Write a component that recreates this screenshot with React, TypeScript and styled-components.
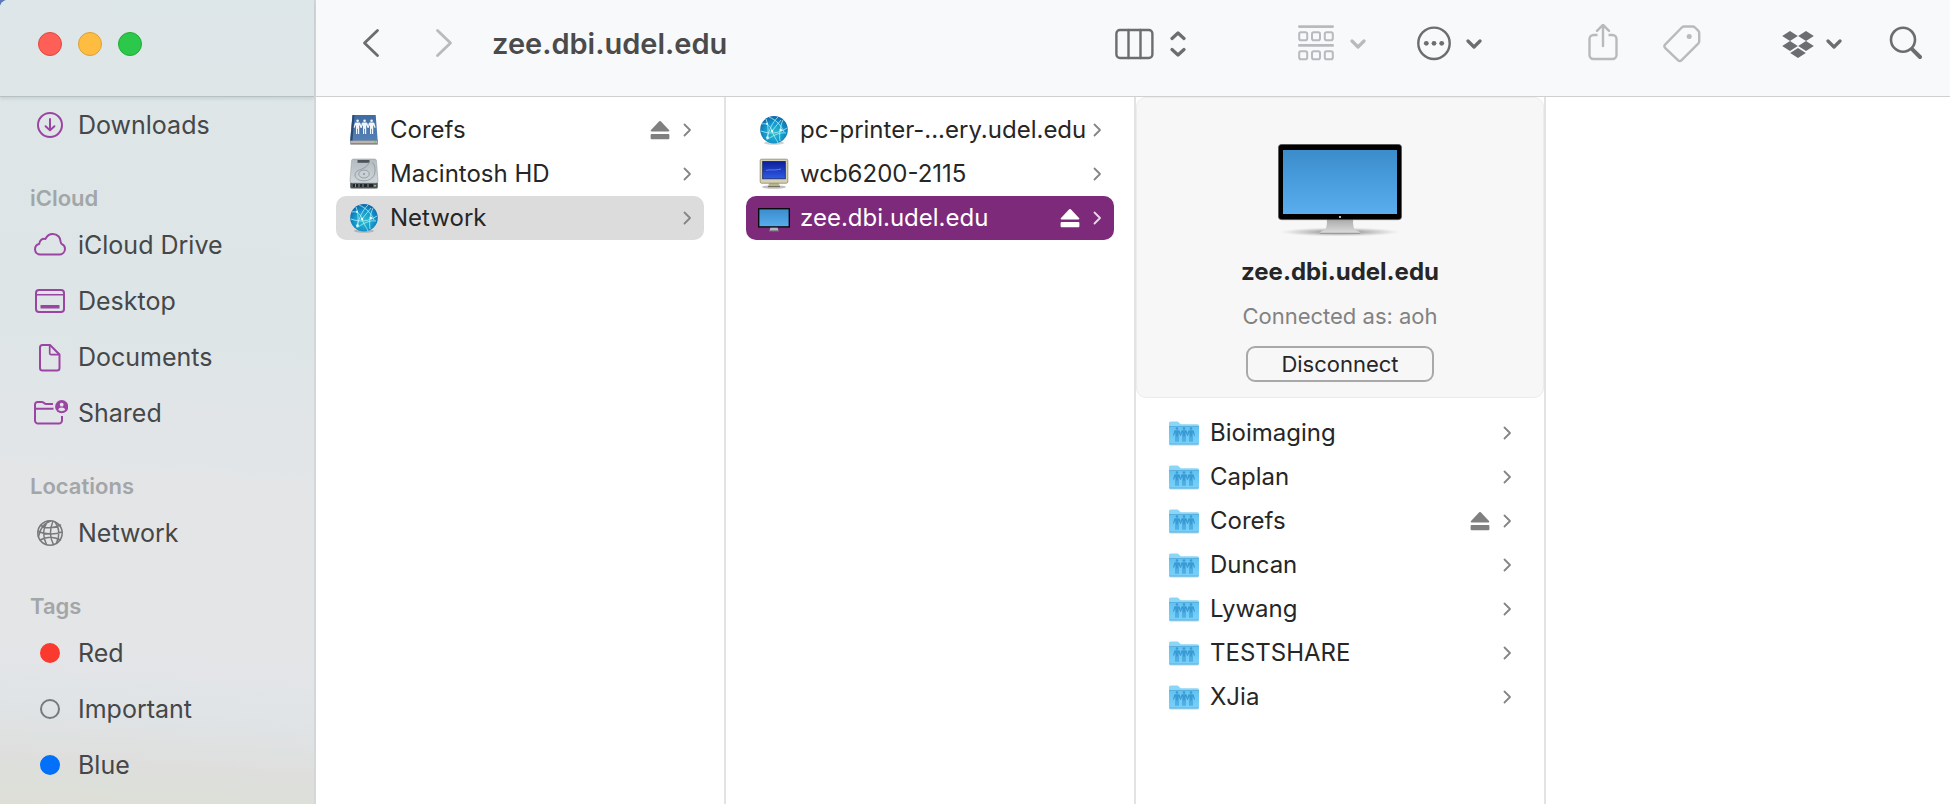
import React from "react";
import styled, { createGlobalStyle } from "styled-components";

const GlobalStyle = createGlobalStyle`
  *, *::before, *::after { box-sizing: border-box; }
  body {
    margin: 0;
    background: #5a78bd;
    font-family: Inter, "Liberation Sans", sans-serif;
    color: #262626;
  }
  button { font: inherit; color: inherit; }
  ul { list-style: none; margin: 0; padding: 0; }
  svg { display: block; flex: none; }
`;

/* ---------- window frame ---------- */

const Window = styled.div`
  display: grid;
  grid-template-columns: 316px minmax(0, 1fr);
  min-height: 100vh;
  overflow: hidden;
  border-top-left-radius: 8px;
  background: #ffffff;
`;

const Sidebar = styled.aside`
  border-right: 2px solid #d4d7d9;
  background: linear-gradient(
    184deg,
    #dde6e8 0%,
    #dde5e7 40%,
    #e1e5e8 50%,
    #e2e5e8 57%,
    #e4e5e7 60%,
    #e4e5e7 80%,
    #e0e4e7 87%,
    #dedfdd 94%,
    #dddfd7 100%
  );
`;

const SidebarTop = styled.div`
  display: flex;
  align-items: center;
  gap: 16px;
  height: 97px;
  padding: 0 38px 9px;
  border-bottom: 1px solid #b9c0c2;
  box-shadow: 0 2px 3px rgba(80, 95, 100, 0.14);
`;

const WindowButton = styled.button<{ $fill: string; $edge: string }>`
  width: 24px;
  height: 24px;
  padding: 0;
  border: 1px solid ${(p) => p.$edge};
  border-radius: 50%;
  background: ${(p) => p.$fill};
`;

const Main = styled.main`
  display: flex;
  flex-direction: column;
  min-width: 0;
`;

/* ---------- sidebar list ---------- */

const SectionTitle = styled.h2`
  margin: 0;
  padding: 26px 0 0 30px;
  font-size: 22px;
  line-height: 38px;
  font-weight: 600;
  color: #a2a6a8;
`;

const SideLink = styled.a`
  display: flex;
  align-items: center;
  gap: 10px;
  height: 56px;
  padding-left: 32px;
  font-size: 25px;
  line-height: 32px;
  color: #454749;
  text-decoration: none;
`;

/* ---------- toolbar ---------- */

const Toolbar = styled.header`
  display: flex;
  align-items: center;
  height: 97px;
  padding: 0 28px 9px 46px;
  border-bottom: 1px solid #cfd0d2;
  background: #f8f9fb;
  color: #6c6d70;
`;

const ToolButton = styled.button<{ $dim?: boolean; $gap?: number }>`
  display: flex;
  align-items: center;
  gap: ${(p) => p.$gap ?? 0}px;
  padding: 0;
  border: 0;
  background: none;
  color: ${(p) => (p.$dim ? "#b9babd" : "#6c6d70")};
`;

const NavButtons = styled.div`
  display: flex;
  gap: 55px;
`;

const Title = styled.h1`
  flex: 1;
  margin: 0 0 0 39px;
  font-size: 29px;
  line-height: 36px;
  font-weight: 600;
  color: #4b4b4c;
  white-space: nowrap;
`;

const ToolGroup = styled.div<{ $gap: number; $before: number }>`
  display: flex;
  align-items: center;
  gap: ${(p) => p.$gap}px;
  margin-left: ${(p) => p.$before}px;
`;

/* ---------- columns ---------- */

const Columns = styled.div`
  display: flex;
  flex: 1;
  background: #ffffff;
`;

const Column = styled.section`
  flex: 0 0 410px;
  border-right: 2px solid #e3e3e4;
`;

const Rows = styled.ul<{ $top: number }>`
  padding: ${(p) => p.$top}px 20px 0;
`;

const RowBox = styled.li<{ $tone?: "gray" | "accent" }>`
  display: flex;
  align-items: center;
  height: 44px;
  padding-right: 12px;
  border-radius: 10px;
  background: ${(p) => (p.$tone === "gray" ? "#dcdcdc" : p.$tone === "accent" ? "#7d2a7b" : "none")};
  color: ${(p) => (p.$tone === "accent" ? "#ffffff" : "#262626")};
`;

const RowLink = styled.a`
  display: flex;
  flex: 1;
  align-items: center;
  gap: 10px;
  min-width: 0;
  padding-left: 12px;
  color: inherit;
  font-size: 24px;
  line-height: 32px;
  text-decoration: none;
  white-space: nowrap;
`;

const Eject = styled.button<{ $light?: boolean }>`
  padding: 0;
  margin-right: 12px;
  border: 0;
  background: none;
  color: ${(p) => (p.$light ? "#ffffff" : "#808080")};
`;

const Arrow = styled.svg<{ $light?: boolean }>`
  color: ${(p) => (p.$light ? "#e9d8e9" : "#858585")};
`;

/* ---------- server preview ---------- */

const Preview = styled.div`
  display: flex;
  flex-direction: column;
  align-items: center;
  height: 301px;
  padding-top: 46px;
  border: 1px solid #ececec;
  border-radius: 10px;
  background: #f7f7f7;
`;

const PreviewName = styled.h2`
  margin: 20px 0 0;
  font-size: 24px;
  line-height: 32px;
  font-weight: 700;
`;

const PreviewStatus = styled.p`
  margin: 13px 0 0;
  font-size: 22px;
  line-height: 30px;
  color: #828282;
`;

const Disconnect = styled.button`
  width: 188px;
  height: 36px;
  margin-top: 15px;
  padding: 0;
  border: 2px solid #a9a9a9;
  border-radius: 9px;
  background: #f7f7f7;
  font-size: 22px;
  line-height: 30px;
`;

/* ---------- sidebar icons ---------- */

const PURPLE = "#9b45a3";

const SideSvg = ({ children, color = PURPLE }: { children: React.ReactNode; color?: string }) => (
  <svg width="36" height="32" viewBox="0 0 36 32" fill="none" stroke={color} strokeWidth="2" strokeLinecap="round" strokeLinejoin="round" aria-hidden>
    {children}
  </svg>
);

const DownloadIcon = () => (
  <SideSvg>
    <circle cx="18" cy="16" r="12" />
    <path d="M18 10v11M13.6 17.2l4.4 4.2 4.4-4.2" />
  </SideSvg>
);

const CloudIcon = () => (
  <SideSvg>
    <path d="M8.5 25.500C5.200 25.500 3 23.200 3 20.300c0-2.700 1.500-4.600 4.200-5.300.2-3.400 2.600-5.800 6.300-5.100C15 6.800 17.500 5 20.800 5c4.600 0 7.800 3.400 7.900 8 .1 1 .4 1.600 1.300 2.100 2 1 3 2.600 3 4.700 0 3.200-2.400 5.700-5.700 5.700z" />
  </SideSvg>
);

const DesktopIcon = () => (
  <SideSvg>
    <rect x="4" y="5" width="28" height="22" rx="3" />
    <path d="M4 9.700h28" strokeWidth="1.600" />
    <rect x="8.500" y="20" width="19" height="3.600" rx=".6" fill={PURPLE} stroke="none" />
  </SideSvg>
);

const DocumentIcon = () => (
  <SideSvg>
    <path d="M10.500 4H18l9.500 9.500V27a2.500 2.500 0 0 1-2.500 2.500H10.500A2.500 2.500 0 0 1 8 27V6.500A2.500 2.500 0 0 1 10.500 4z" />
    <path d="M17.700 4.500v7.700a1.500 1.500 0 0 0 1.500 1.500h8" strokeWidth="1.700" />
  </SideSvg>
);

const SharedIcon = () => (
  <SideSvg>
    <path d="M30 19v4.500a3 3 0 0 1-3 3H6a3 3 0 0 1-3-3V7.500A2.500 2.500 0 0 1 5.500 5h4.200c2.300 0 2.300 2 4.600 2H21M3 11.800h18.500" strokeLinecap="butt" />
    <circle cx="29.700" cy="9.700" r="6.600" fill={PURPLE} stroke="none" />
    <circle cx="29.700" cy="7.700" r="1.900" fill="#e1e5e8" stroke="none" />
    <path d="M26.200 13c.5-1.800 1.800-2.500 3.500-2.500s3 .7 3.500 2.500c-1.900 1.500-5.100 1.500-7 0z" fill="#e1e5e8" stroke="none" />
  </SideSvg>
);

const GlobeIcon = () => (
  <SideSvg color="#77797b">
    <g strokeWidth="1.500">
      <circle cx="18" cy="16" r="12.200" />
      <path d="M16 4.200C10.500 11 10.500 20 14.500 27.500M21 4.200C17.500 12 17.500 20 21.500 27.600M23 5c4.500 5.500 5 14 1.500 21M18.500 4C13 6 8 11 6.500 19.500M8.500 8.500c6 3 13.500 3 20-.5M6 14.500c8 3 17 3 24 .5M8 23c6.500-3.500 14-3.500 20.500 0" />
    </g>
  </SideSvg>
);

const TagDot = ({ fill, edge }: { fill: string; edge: string }) => (
  <SideSvg color={edge}>
    <circle cx="18" cy="16" r="9" fill={fill} />
  </SideSvg>
);

/* ---------- toolbar icons ---------- */

const ToolSvg = ({ width, stroke = 2.4, children }: { width: number; stroke?: number; children: React.ReactNode }) => (
  <svg width={width} height="40" viewBox={`0 0 ${width} 40`} fill="none" stroke="currentColor" strokeWidth={stroke} strokeLinecap="round" strokeLinejoin="round" aria-hidden>
    {children}
  </svg>
);

const SmallChevron = () => (
  <ToolSvg width={16} stroke={3.2}>
    <path d="M2 17l6 6 6-6" />
  </ToolSvg>
);

const ColumnsIcon = () => (
  <ToolSvg width={39}>
    <rect x="1.400" y="6" width="36" height="28" rx="3.500" />
    <path d="M13.500 6v28M25.500 6v28" />
  </ToolSvg>
);

const UpDownIcon = () => (
  <ToolSvg width={16} stroke={3.2}>
    <path d="M2 14.500L8 9l6 5.500M2 25.500L8 31l6-5.500" />
  </ToolSvg>
);

const GroupIcon = () => (
  <ToolSvg width={36} stroke={2}>
    <path d="M1.300 2.600h33.400M1.300 21.400h33.400" strokeWidth="2.600" />
    {[8.2, 27.2].map((y) =>
      [1.2, 14, 26.800].map((x) => <rect key={`${x}-${y}`} x={x} y={y} width="8" height="8" rx="1.800" />)
    )}
  </ToolSvg>
);

const MoreIcon = () => (
  <ToolSvg width={34}>
    <circle cx="17" cy="19.300" r="15.700" />
    <g fill="currentColor" stroke="none">
      <circle cx="9.300" cy="19.300" r="2.400" />
      <circle cx="17" cy="19.300" r="2.400" />
      <circle cx="24.700" cy="19.300" r="2.400" />
    </g>
  </ToolSvg>
);

const ShareIcon = () => (
  <ToolSvg width={30}>
    <path d="M9.500 11H5.500a4 4 0 0 0-4 4v16a4 4 0 0 0 4 4h19a4 4 0 0 0 4-4V15a4 4 0 0 0-4-4h-4" strokeLinecap="butt" />
    <path d="M15 22V1.200M9 6.800l6-6 6 6" />
  </ToolSvg>
);

const TagIcon = () => (
  <ToolSvg width={38}>
    <path d="M21.300 2.500h8.200c1 0 1.800.3 2.500 1l3.200 3.200c.7.700 1 1.500 1 2.500v8c0 1-.3 1.800-1 2.500L18.600 36.200c-1.200 1.200-2.500 1.200-3.700 0L2.300 24.100c-1.200-1.200-1.200-2.500 0-3.700L18.800 3.500c.7-.7 1.500-1 2.500-1z" />
    <circle cx="26.200" cy="12.500" r="2.500" fill="currentColor" stroke="none" />
  </ToolSvg>
);

const DropboxIcon = () => (
  <ToolSvg width={32}>
    <g fill="currentColor" stroke="none">
      {[
        [8, 12],
        [24, 12],
        [8, 22],
        [24, 22],
        [16, 29],
      ].map(([x, y]) => (
        <path key={`${x}-${y}`} d={`M${x} ${y - 5}l7.800 5-7.800 5-7.800-5z`} />
      ))}
    </g>
  </ToolSvg>
);

const SearchIcon = () => (
  <ToolSvg width={33} stroke={2.6}>
    <circle cx="14" cy="15.700" r="12" />
    <path d="M23.300 25.300l7.700 7.700" strokeWidth="4" />
  </ToolSvg>
);

/* ---------- file icons ---------- */

const People = ({ fill }: { fill: string }) => (
  <g fill={fill}>
    {[-7, 0, 7].map((x) => (
      <g key={x} transform={`translate(${x} 0)`}>
        <circle cx="16" cy="9.700" r="1.300" />
        <path d="M14.200 11.500h3.600c.6 0 .9.300 1.100.9l1.100 4.200-.9.300-1.500-3.100V23h-1.200v-5.200h-.8V23h-1.200v-9.200l-1.500 3.100-.9-.3 1.100-4.200c.2-.6.5-.9 1.100-.9z" />
      </g>
    ))}
  </g>
);

const FileSvg = ({ children }: { children: React.ReactNode }) => (
  <svg width="32" height="32" viewBox="0 0 32 32" aria-hidden>
    {children}
  </svg>
);

const ShareDiskIcon = () => (
  <FileSvg>
    <path d="M2.300 26h27.500v4.600H2.300z" fill="#55504d" opacity=".75" />
    <path d="M3 26.500h26v2.700H3z" fill="#bdb5ad" />
    <path d="M4.500 1h23.200l2 25.500H2.200z" fill="url(#book)" />
    <path d="M4.500 1h2L4.500 26.500H2.200z" fill="#294a74" />
    <rect x="26.500" y="27.300" width="1.600" height="1.600" fill="#62d64c" />
    <g transform="translate(.6 -3)">
      <People fill="#f2f6fb" />
    </g>
  </FileSvg>
);

const DriveIcon = () => (
  <FileSvg>
    <rect x="2.200" y="24" width="27.600" height="6.500" rx="1.500" fill="#4d5255" />
    <path d="M5 26h20v3H5z" fill="#22262a" />
    <path d="M7.500 26v3M11 26v3M15 26v3M20 26v3" stroke="#8b9296" />
    <rect x="26" y="27" width="2" height="1.500" fill="#6bd657" />
    <path d="M5.500 1h21a2 2 0 0 1 2 2l1.500 20a2 2 0 0 1-2 2H4a2 2 0 0 1-2-2L3.500 3a2 2 0 0 1 2-2z" fill="url(#drive)" stroke="#9aa2a6" strokeWidth=".6" />
    <path d="M9.500 2h12v2.800h-12z" fill="#4e555a" />
    <g fill="none" stroke="#89939a" strokeWidth=".8">
      <path d="M24.500 4.500c2.500 3 3.300 7 2 11.500-1.500 4.500-6 6.800-10.500 6.800-5 0-9-2.300-9-5.800 0-4.500 5-4.800 9-7 3-1.700 4.500-3.500 5-6" />
      <ellipse cx="16" cy="16" rx="5.200" ry="4" fill="#cbd2d5" />
    </g>
    <circle cx="16" cy="16" r="1" fill="#8b9498" />
  </FileSvg>
);

const NetworkIcon = () => (
  <FileSvg>
    <ellipse cx="16" cy="29" rx="10" ry="1.800" fill="#000" opacity=".18" />
    <circle cx="16" cy="15.800" r="13.800" fill="url(#globe)" />
    <g fill="none" stroke="#b8f0fb" strokeWidth=".9" opacity=".85">
      <path d="M4 10c5-1 8 1 10 7s5 9 6 12M8 5c2 5 3 12 1 21M11 3c7 3 12 8 15 15M20 3c-6 6-9 13-11 22M3 17c8 3 17 3 26-3M25 6c-3 7-4 13-3 21M10 25c6-4 12-7 18-6M14 17l9-11" />
    </g>
    <g fill="#e7fdff">
      <circle cx="14" cy="17" r="1.300" />
      <circle cx="9.500" cy="23.500" r="1.300" />
      <circle cx="22.800" cy="16" r="1.200" />
      <circle cx="9" cy="9.800" r="1" />
    </g>
  </FileSvg>
);

const CrtIcon = () => (
  <FileSvg>
    <ellipse cx="16" cy="29" rx="12" ry="1.800" fill="#000" opacity=".25" />
    <path d="M11.500 24h9l1.500 4.600H10z" fill="#b9b592" />
    <rect x="2.200" y="1.200" width="27.600" height="24" rx="1.400" fill="#d5d1b4" stroke="#8b8768" strokeWidth=".8" />
    <rect x="4.700" y="3.400" width="22.600" height="17.400" fill="url(#crt)" stroke="#17265d" strokeWidth=".8" />
    <path d="M8 12.500c4-1.500 7 .5 15-1.500" stroke="#6e92ee" strokeWidth=".8" fill="none" />
    <path d="M10 28.600h12" stroke="#6d6a52" />
  </FileSvg>
);

const SmallMonitorIcon = () => (
  <FileSvg>
    <path d="M12.500 25h7l1 4h-9z" fill="#b6b8bd" />
    <path d="M11 29h10" stroke="#6b6d72" strokeWidth="1.200" />
    <rect x=".7" y="6.700" width="30.600" height="18.200" fill="url(#screen)" stroke="#0b0b0f" strokeWidth="1.400" />
  </FileSvg>
);

const FolderIcon = () => (
  <FileSvg>
    <path d="M1.500 28h29" stroke="#000" strokeOpacity=".18" />
    <path d="M1 6a1.500 1.500 0 0 1 1.500-1.500h7c1.300 0 2 2.700 3.500 2.700h16.500A1.500 1.500 0 0 1 31 8.700V27H1z" fill="#8dd5f7" />
    <path d="M1 9.500h30v16.700a1.200 1.200 0 0 1-1.200 1.200H2.200A1.200 1.200 0 0 1 1 26.200z" fill="url(#folder)" />
    <path d="M1 9.500h30M1.500 27.100h29" stroke="#4fa9d8" strokeWidth=".8" />
    <g transform="translate(0 1.800)">
      <People fill="#3a9ad4" />
    </g>
  </FileSvg>
);

const LargeMonitor = () => (
  <svg width="124" height="92" viewBox="0 0 124 92" aria-hidden>
    <ellipse cx="62" cy="88" rx="60" ry="4.500" fill="url(#shade)" />
    <path d="M49 75h26c0 5 .3 8 1.500 10l6 3.500v1.300H41.500v-1.300l6-3.500C48.700 83 49 80 49 75z" fill="url(#stand)" />
    <path d="M41.500 89.300h41" stroke="#8c8c8c" />
    <rect x=".3" y=".3" width="123.400" height="75.400" rx="3.500" fill="#000" stroke="#777" strokeWidth=".6" />
    <rect x="5" y="6" width="114" height="64" fill="url(#screen)" />
    <circle cx="62" cy="73" r="1.100" fill="#e8e8e8" />
  </svg>
);

const Gradient = ({ id, from, to }: { id: string; from: string; to: string }) => (
  <linearGradient id={id} x1="0" y1="0" x2="0" y2="1">
    <stop offset="0" stopColor={from} />
    <stop offset="1" stopColor={to} />
  </linearGradient>
);

const PaintHolder = styled.svg`
  position: absolute;
`;

const Paints = () => (
  <PaintHolder width="0" height="0" aria-hidden>
    <defs>
      <Gradient id="book" from="#3f6ba1" to="#5481b5" />
      <Gradient id="drive" from="#b3bbbf" to="#d2d8db" />
      <Gradient id="crt" from="#0c1f9c" to="#2f5ce6" />
      <Gradient id="screen" from="#3a8ccb" to="#5aaeee" />
      <Gradient id="folder" from="#62c2f0" to="#79d1fa" />
      <Gradient id="stand" from="#a9a9a9" to="#dedede" />
      <radialGradient id="globe" cx=".5" cy=".6" r=".6">
        <stop offset="0" stopColor="#27c0d0" />
        <stop offset=".6" stopColor="#1596c9" />
        <stop offset="1" stopColor="#0b66ab" />
      </radialGradient>
      <radialGradient id="shade">
        <stop offset="0" stopColor="#555" stopOpacity=".8" />
        <stop offset="1" stopColor="#888" stopOpacity="0" />
      </radialGradient>
    </defs>
  </PaintHolder>
);

/* ---------- data ---------- */

type Item = { name: string; icon: React.ReactNode; eject?: boolean; tone?: "gray" | "accent" };

const sections: { title?: string; items: Item[] }[] = [
  { items: [{ name: "Downloads", icon: <DownloadIcon /> }] },
  {
    title: "iCloud",
    items: [
      { name: "iCloud Drive", icon: <CloudIcon /> },
      { name: "Desktop", icon: <DesktopIcon /> },
      { name: "Documents", icon: <DocumentIcon /> },
      { name: "Shared", icon: <SharedIcon /> },
    ],
  },
  { title: "Locations", items: [{ name: "Network", icon: <GlobeIcon /> }] },
  {
    title: "Tags",
    items: [
      { name: "Red", icon: <TagDot fill="#fb3a2f" edge="#fb3a2f" /> },
      { name: "Important", icon: <TagDot fill="none" edge="#77797b" /> },
      { name: "Blue", icon: <TagDot fill="#0270f8" edge="#0270f8" /> },
    ],
  },
];

const volumes: Item[] = [
  { name: "Corefs", icon: <ShareDiskIcon />, eject: true },
  { name: "Macintosh HD", icon: <DriveIcon /> },
  { name: "Network", icon: <NetworkIcon />, tone: "gray" },
];

const hosts: Item[] = [
  { name: "pc-printer-...ery.udel.edu", icon: <NetworkIcon /> },
  { name: "wcb6200-2115", icon: <CrtIcon /> },
  { name: "zee.dbi.udel.edu", icon: <SmallMonitorIcon />, eject: true, tone: "accent" },
];

const shares: Item[] = ["Bioimaging", "Caplan", "Corefs", "Duncan", "Lywang", "TESTSHARE", "XJia"].map((name) => ({
  name,
  icon: <FolderIcon />,
  eject: name === "Corefs",
}));

const FileList = ({ items, top }: { items: Item[]; top: number }) => (
  <Rows $top={top}>
    {items.map((item) => {
      const light = item.tone === "accent";
      return (
        <RowBox key={item.name} $tone={item.tone}>
          <RowLink href="#">
            {item.icon}
            <span>{item.name}</span>
          </RowLink>
          {item.eject && (
            <Eject $light={light} aria-label={`Eject ${item.name}`}>
              <svg width="20" height="20" viewBox="0 0 20 20" fill="currentColor" aria-hidden>
                <path d="M9.200 1.300a1.200 1.200 0 0 1 1.600 0l8.200 8.700c.6.700.3 1.400-.5 1.400h-17c-.8 0-1.100-.7-.5-1.400z" />
                <rect x=".6" y="14" width="18.800" height="5.200" rx="1" />
              </svg>
            </Eject>
          )}
          <Arrow $light={light} width="10" height="16" viewBox="0 0 10 16" fill="none" stroke="currentColor" strokeWidth="1.800" strokeLinecap="round" strokeLinejoin="round" aria-hidden>
            <path d="M2.500 2.500L8 8l-5.500 5.500" />
          </Arrow>
        </RowBox>
      );
    })}
  </Rows>
);

export default function App() {
  return (
    <>
      <GlobalStyle />
      <Paints />
      <Window>
        <Sidebar>
          <SidebarTop>
            <WindowButton $fill="#fe5f57" $edge="#e2463f" aria-label="Close" />
            <WindowButton $fill="#febc40" $edge="#dfa035" aria-label="Minimize" />
            <WindowButton $fill="#2bc84c" $edge="#1dad2f" aria-label="Zoom" />
          </SidebarTop>
          <nav aria-label="Favorites">
            {sections.map((section, i) => (
              <div key={i}>
                {section.title && <SectionTitle>{section.title}</SectionTitle>}
                <ul>
                  {section.items.map((item) => (
                    <li key={item.name}>
                      <SideLink href="#">
                        {item.icon}
                        <span>{item.name}</span>
                      </SideLink>
                    </li>
                  ))}
                </ul>
              </div>
            ))}
          </nav>
        </Sidebar>
        <Main>
          <Toolbar>
            <NavButtons>
              <ToolButton aria-label="Back">
                <ToolSvg width={18} stroke={2.8}>
                  <path d="M15.500 6.500L2.500 19l13 12.500" />
                </ToolSvg>
              </ToolButton>
              <ToolButton $dim aria-label="Forward">
                <ToolSvg width={18} stroke={2.8}>
                  <path d="M2.500 6.500l13 12.500-13 12.500" />
                </ToolSvg>
              </ToolButton>
            </NavButtons>
            <Title>zee.dbi.udel.edu</Title>
            <ToolButton $gap={16} aria-label="View as columns">
              <ColumnsIcon />
              <UpDownIcon />
            </ToolButton>
            <ToolGroup $gap={51} $before={112}>
              <ToolButton $dim $gap={16} aria-label="Group">
                <GroupIcon />
                <SmallChevron />
              </ToolButton>
              <ToolButton $gap={15} aria-label="Actions">
                <MoreIcon />
                <SmallChevron />
              </ToolButton>
            </ToolGroup>
            <ToolGroup $gap={45} $before={106}>
              <ToolButton $dim aria-label="Share">
                <ShareIcon />
              </ToolButton>
              <ToolButton $dim aria-label="Edit tags">
                <TagIcon />
              </ToolButton>
            </ToolGroup>
            <ToolGroup $gap={47} $before={81}>
              <ToolButton $gap={12} aria-label="Dropbox">
                <DropboxIcon />
                <SmallChevron />
              </ToolButton>
              <ToolButton aria-label="Search">
                <SearchIcon />
              </ToolButton>
            </ToolGroup>
          </Toolbar>
          <Columns>
            <Column>
              <FileList items={volumes} top={11} />
            </Column>
            <Column>
              <FileList items={hosts} top={11} />
            </Column>
            <Column>
              <Preview>
                <LargeMonitor />
                <PreviewName>zee.dbi.udel.edu</PreviewName>
                <PreviewStatus>Connected as: aoh</PreviewStatus>
                <Disconnect>Disconnect</Disconnect>
              </Preview>
              <FileList items={shares} top={13} />
            </Column>
          </Columns>
        </Main>
      </Window>
    </>
  );
}
